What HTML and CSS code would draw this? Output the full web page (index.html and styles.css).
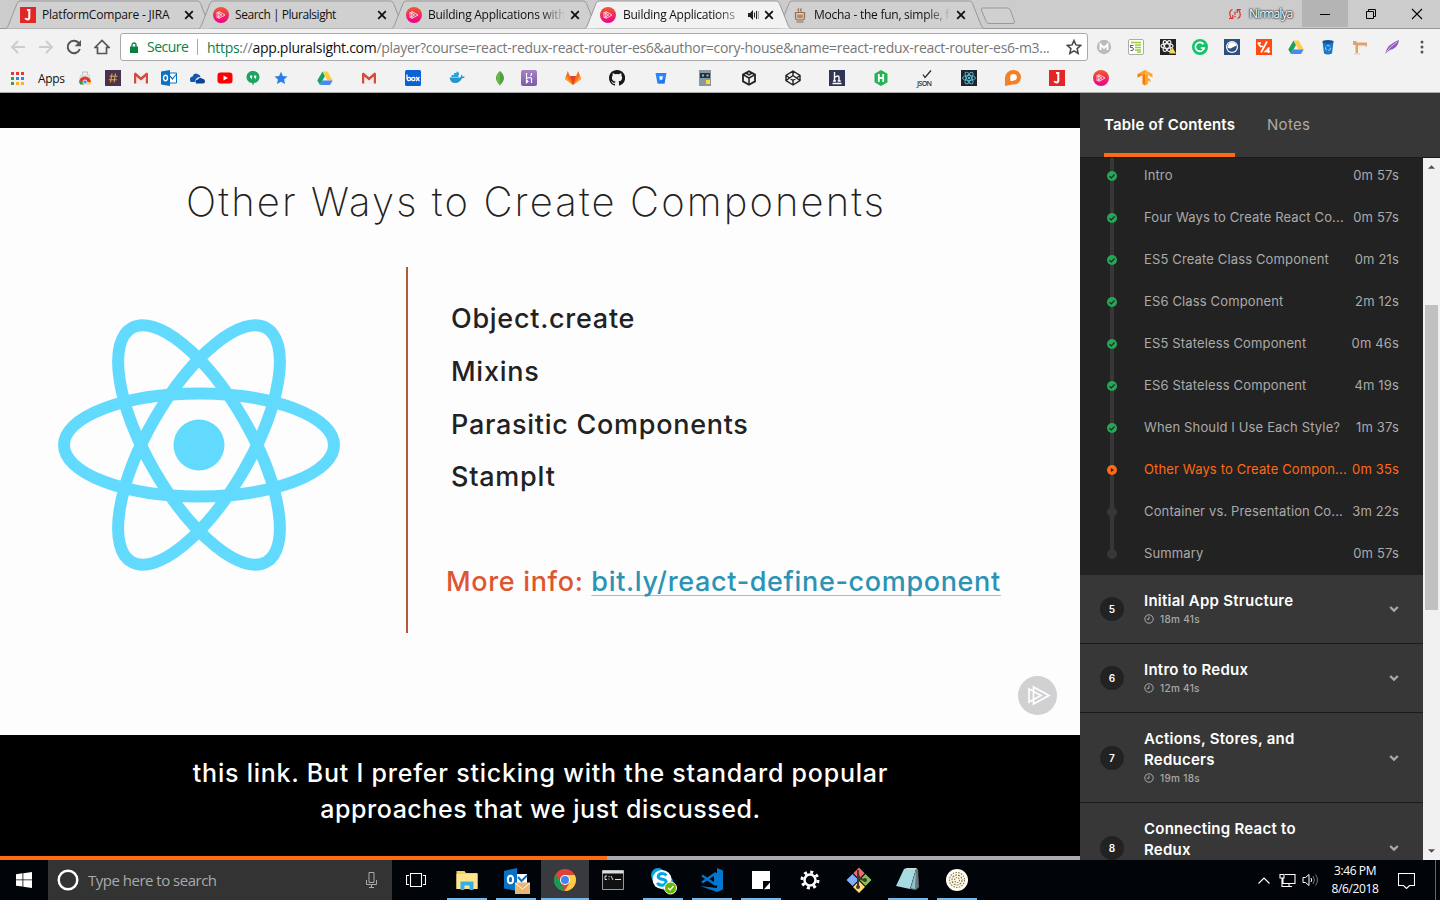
FILE: index.html
```html
<!DOCTYPE html>
<html lang="en">
<head>
<meta charset="utf-8">
<title>Building Applications with React and Redux</title>
<link rel="stylesheet" href="styles.css">
</head>
<body>
<svg class="defs" width="0" height="0">
  <defs>
    <linearGradient id="ps" x1="0" y1="0" x2="0" y2="1"><stop offset="0" stop-color="#f15b2a"/><stop offset="1" stop-color="#ec008c"/></linearGradient>
    <linearGradient id="vi" x1="0" y1="0" x2="0" y2="1"><stop offset="0" stop-color="#a583c4"/><stop offset="1" stop-color="#7d5aa8"/></linearGradient>
    <symbol id="i-ps" viewBox="0 0 16 16"><circle cx="8" cy="8" r="8" fill="url(#ps)"/><path d="M5.800 4.500 12 8l-6.200 3.500zM4 5.300 8.700 8 4 10.700z" fill="none" stroke="#fff" stroke-width=".9" opacity=".85"/></symbol>
    <symbol id="i-jira" viewBox="0 0 16 16"><path fill="#e22626" d="M0 0h16v16H0z"/><path d="M7 3h3.400M9.300 3v7.200q0 2.200-2 2.200-1.500 0-2-1.200" fill="none" stroke="#fff" stroke-width="2"/></symbol>
    <symbol id="i-x" viewBox="0 0 10 10"><path d="m1.200 1.200 7.600 7.600m0-7.600-7.600 7.600" stroke="#111" stroke-width="1.800"/></symbol>
    <symbol id="i-gmail" viewBox="0 0 16 16"><path fill="#eee" d="M2 3h12v11H2z"/><path fill="#d54b3d" d="M1 4v9.500h2.200V6.500L8 10.500l4.800-4V13.500H15V4q0-1.500-1.500-1.500L8 7.300 2.500 2.500Q1 2.500 1 4z"/></symbol>
    <symbol id="i-drive" viewBox="0 0 16 16"><path fill="#19a15f" d="M5.500 1.500 8 6 3 15 .3 10.500z"/><path fill="#fc4" d="M5.500 1.500h5.200l5 9h-5.200z"/><path fill="#4688f4" d="M5.500 10.500h10.200L13 15H3z"/></symbol>
    <symbol id="i-chev" viewBox="0 0 10 8"><path d="m1.200 2 3.800 3.600L8.800 2" fill="none" stroke="#aaa" stroke-width="2.300"/></symbol>
    <symbol id="i-clock" viewBox="0 0 10 10"><circle cx="5" cy="5" r="4.200" fill="none" stroke="#aaa"/><path d="M5 2.500V5.300H2.800" fill="none" stroke="#aaa"/></symbol>
    <symbol id="i-done" viewBox="0 0 10 10"><circle cx="5" cy="5" r="5" fill="#23a956"/><path d="m2.500 5.200 1.800 1.700 3.300-3.500" fill="none" stroke="#222" stroke-width="1.200"/></symbol>
    <symbol id="i-now" viewBox="0 0 10 10"><circle cx="5" cy="5" r="5" fill="#ff6a13"/><path d="M3.900 3.100 7 5 3.900 6.900z" fill="#222"/></symbol>
    <symbol id="i-todo" viewBox="0 0 10 10"><circle cx="5" cy="5" r="5" fill="#373737"/></symbol>
    <symbol id="i-tab" viewBox="0 0 206 29"><path d="M0 28.500Q1.500 28 2.500 25L11 3.500Q12 1 14 1H191.500Q193.500 1 194.500 3.500L203 25Q204 28 206 28.500" stroke="#999"/></symbol>
  </defs>
</svg>

<header class="browser">
  <div class="tabs">
    <div class="tab"><svg class="shape"><use href="#i-tab"/></svg><svg class="fav"><use href="#i-jira"/></svg><span class="name">PlatformCompare - JIRA</span><svg class="x"><use href="#i-x"/></svg></div>
    <div class="tab"><svg class="shape"><use href="#i-tab"/></svg><svg class="fav"><use href="#i-ps"/></svg><span class="name tight">Search | Pluralsight</span><svg class="x"><use href="#i-x"/></svg></div>
    <div class="tab"><svg class="shape"><use href="#i-tab"/></svg><svg class="fav"><use href="#i-ps"/></svg><span class="name fade">Building Applications with</span><svg class="x"><use href="#i-x"/></svg></div>
    <div class="tab active"><svg class="shape"><use href="#i-tab"/></svg><svg class="fav"><use href="#i-ps"/></svg><span class="name short">Building Applications</span><svg class="sound" viewBox="0 0 11 10"><path d="M0 3h2l3-3v10L2 7H0z" fill="#222"/><path d="M6.500 2.500v5M8.500 1v8" stroke="#222"/><path d="M10.300 1v8" stroke="#999"/></svg><svg class="x"><use href="#i-x"/></svg></div>
    <div class="tab"><svg class="shape"><use href="#i-tab"/></svg><svg class="fav" viewBox="0 0 16 16"><path d="M3.500 5.500h9v5q0 2-2 2.500h-5q-2-.5-2-2.500zM4.500 15h7M7 4.500q-2-1.500 0-3M9.500 4.500q-2-1.500 0-3" fill="none" stroke="#9a6a45" stroke-width="1.200"/><path d="M5 7.500h6v3q-3 2-6 0z" fill="#b98a63"/></svg><span class="name fade">Mocha - the fun, simple, f</span><svg class="x"><use href="#i-x"/></svg></div>
    <svg class="newtab" viewBox="0 0 36 18"><path d="M2.500 1h25q2 0 2.800 2l4 11q.7 2.500-1.300 2.500H9q-2 0-2.800-2L1.500 3Q1 1 2.500 1z" fill="#d0d0d0" stroke="#999"/></svg>
    <div class="window">
      <svg class="sync" viewBox="0 0 14 12"><path d="M4.500 1.500Q1.500 2.500 1.800 6T4 10.500M1 10.500h3.800V7M9.500 10.500q3-1 2.700-4.500T10 1.500M13 1.500H9.200V5" fill="none" stroke="#d32f2f" stroke-width="1.200"/><path d="M7 3.500v3.500M7 8v1.300" stroke="#d32f2f" stroke-width="1.200"/></svg>
      <span class="user">Nirmalya</span>
      <span class="wbtn hover"><svg viewBox="0 0 12 12"><path d="M1 6.500h10" stroke="#000"/></svg></span>
      <span class="wbtn"><svg viewBox="0 0 12 12"><path d="M1.500 3.500h7v7h-7zM3.500 3V1.500h7v7H9" fill="none" stroke="#000"/></svg></span>
      <span class="wbtn"><svg viewBox="0 0 12 12"><path d="m1 1 10 10M11 1 1 11" stroke="#000" stroke-width="1.100"/></svg></span>
    </div>
  </div>

  <div class="toolbar">
    <div class="nav">
      <svg viewBox="0 0 16 16"><path d="M15 8H2m6-6L2 8l6 6" fill="none" stroke="#ccc" stroke-width="1.800"/></svg>
      <svg viewBox="0 0 16 16"><path d="M1 8h13M8 2l6 6-6 6" fill="none" stroke="#ccc" stroke-width="1.800"/></svg>
      <svg viewBox="0 0 16 16"><path d="M13.800 10A6.200 6.200 0 1 1 12.500 3.800L14 5.500" fill="none" stroke="#555" stroke-width="2"/><path d="M15 1v6.300H8.700z" fill="#555"/></svg>
      <svg viewBox="0 0 16 16"><path d="M1 8.500 8 1.500l7 7h-2.500v6h-9v-6z" fill="none" stroke="#555" stroke-width="1.700"/></svg>
    </div>
    <div class="omnibox">
      <svg class="lock" viewBox="0 0 8 11"><path d="M2 5V3a2 2 0 0 1 4 0v2" fill="none" stroke="#0b8043" stroke-width="1.300"/><path d="M0 4.500h8V11H0z" fill="#0b8043"/></svg>
      <span class="secure">Secure</span>
      <span class="url"><i class="g">https</i>://<b>app.pluralsight.com</b>/player?course=react-redux-react-router-es6&amp;author=cory-house&amp;name=react-redux-react-router-es6-m3...</span>
      <svg class="star" viewBox="0 0 16 16"><path d="m8 1.500 1.900 4.400 4.900.5-3.700 3.200 1.100 4.800L8 11.900l-4.200 2.500 1.100-4.800L1.200 6.400l4.900-.5z" fill="none" stroke="#444" stroke-width="1.500"/></svg>
    </div>
    <div class="exts">
      <svg viewBox="0 0 16 16"><circle cx="8" cy="8" r="7.200" fill="#bbb"/><path d="M4.500 11V5.500L8 9l3.500-3.500V11" fill="none" stroke="#fff" stroke-width="1.800"/></svg>
      <svg viewBox="0 0 16 16"><rect x=".5" y=".5" width="15" height="15" rx="1.500" fill="#fff" stroke="#aaa"/><path d="M3 3.500h10M7 6h6M7 8.500h6M7 11h6M9 13h4" stroke="#9bcb3c" stroke-width="1.300"/><path d="M5.500 6.500h-3v2q3-.5 3 1.500t-3 1.500" fill="none" stroke="#555"/></svg>
      <svg viewBox="0 0 16 16"><path fill="#222" d="M0 0h16v16H0z"/><g fill="none" stroke="#eee" stroke-width="1.200"><ellipse cx="7" cy="7" rx="6" ry="2.400"/><ellipse cx="7" cy="7" rx="6" ry="2.400" transform="rotate(60 7 7)"/><ellipse cx="7" cy="7" rx="6" ry="2.400" transform="rotate(120 7 7)"/></g><path d="m12.500 8.500 3.500 6H9z" fill="#f4e04d"/></svg>
      <svg viewBox="0 0 16 16"><circle cx="8" cy="8" r="8" fill="#15c26b"/><path d="M11.500 5.200A4.500 4.500 0 1 0 12.200 9H8.800" fill="none" stroke="#fff" stroke-width="1.700"/></svg>
      <svg viewBox="0 0 16 16"><path fill="#2f4f7f" d="M0 0h16v16H0z"/><circle cx="8" cy="8" r="6" fill="#fff"/><circle cx="8" cy="8" r="4.800" fill="#2f4f7f"/><path d="M3.500 8.500Q6 10.500 8.500 8.500t4-1.500Q12 3.300 8 3.300T3.500 8.500z" fill="#fff"/></svg>
      <svg viewBox="0 0 16 16"><path fill="#ff4a12" d="M0 0h16v16H0z"/><path d="M11 2.500 5 13.500M1.500 4h3.500M2 4l2.500 3.500H7M13.500 8.500l-4 4H14M12.500 8.500V14" fill="none" stroke="#fff" stroke-width="1.700"/></svg>
      <svg viewBox="0 0 16 16"><use href="#i-drive"/></svg>
      <svg viewBox="0 0 16 16"><path d="M2.500 2.500h11l-1.500 12q-4 2-8 0z" fill="#1d78c9"/><ellipse cx="8" cy="2.700" rx="5.500" ry="1.800" fill="#145494"/><circle cx="8" cy="9" r="2.500" fill="none" stroke="#a9dcff" stroke-dasharray="3.500 1.500"/></svg>
      <svg viewBox="0 0 16 16"><path d="M1 2h3.500v1.500H15v4h-1.500V6.500H6V14H3.500V6H1z" fill="#e2a368"/><path d="M2 15h6" stroke="#ccc"/></svg>
      <svg viewBox="0 0 16 16"><path d="M1 15Q3 5 15 1q-1 8-9 10z" fill="#9357bd"/><path d="M1 15Q6 7 13 3" stroke="#d9bdee" fill="none"/></svg>
      <svg class="dots" viewBox="0 0 4 16"><g fill="#555"><circle cx="2" cy="3" r="1.500"/><circle cx="2" cy="8" r="1.500"/><circle cx="2" cy="13" r="1.500"/></g></svg>
    </div>
  </div>

  <div class="bookmarks">
    <svg class="grid" viewBox="0 0 13 13"><path d="M0 1.500h13" stroke="#e53a34" stroke-width="3" stroke-dasharray="3 2"/><path d="M0 6.500h3" stroke="#3c9e4d" stroke-width="3"/><path d="M5 6.500h8" stroke="#2b87f0" stroke-width="3" stroke-dasharray="3 2"/><path d="M0 11.500h3" stroke="#3c9e4d" stroke-width="3"/><path d="M5 11.500h8" stroke="#fbb325" stroke-width="3" stroke-dasharray="3 2"/></svg>
    <span class="apps">Apps</span>
    <div class="near">
      <svg viewBox="0 0 16 16"><path d="M3 4.500h10l1.500 9.500h-13z" fill="#ddd"/><path d="M5.500 4.500V2h5v2.500" fill="none" stroke="#bbb"/><path d="M2 12.500a6 6 0 0 1 12 0z" fill="#e03b2f"/><path d="M2.500 11 6 12l1.500 2.500H3z" fill="#2ea04f"/><path d="M14 12h-4l-2 2.500h5.500z" fill="#fc4"/><circle cx="8" cy="12" r="2" fill="#4688f4" stroke="#fff" stroke-width=".8"/></svg>
      <svg viewBox="0 0 16 16"><path fill="#4a314d" d="M0 0h16v16H0z"/><path d="M7 3.500 5.500 12.500M10.500 3.500 9 12.500M4.500 6.200h8M3.800 9.800h8" stroke="#d8a948" stroke-width="1.100"/></svg>
      <svg viewBox="0 0 16 16"><use href="#i-gmail"/></svg>
      <svg viewBox="0 0 16 16"><path d="M8 3h7.500v10H8z" fill="#fff" stroke="#0a72c4"/><path d="m9 6 2.500 3L15 4.500" fill="none" stroke="#0a72c4" stroke-width="1.200"/><path d="M0 1.500 9 0v16l-9-1.500z" fill="#0a72c4"/><ellipse cx="4.500" cy="8" rx="2" ry="2.700" fill="none" stroke="#fff" stroke-width="1.400"/></svg>
      <svg viewBox="0 0 16 16"><path d="M1 10q-.5-3 2.500-3.500Q5 2.500 8.500 4q3 1 3 3-5 0-5.500 5H2q-1-.5-1-2z" fill="#1557b0"/><path d="M7 13.500q-1.500-4 2-4Q10.500 6.500 13 8.500q3 .5 3 3 0 2-2 2z" fill="#0b4497"/></svg>
      <svg viewBox="0 0 16 16"><rect x=".5" y="2.500" width="15" height="11" rx="3" fill="#f00"/><path d="m6.500 5.500 4.500 2.500-4.500 2.500z" fill="#fff"/></svg>
      <svg viewBox="0 0 16 16"><path d="M8 1a6 6 0 0 1 1 12l-1 2.500-1-2.500A6 6 0 0 1 8 1z" fill="#1fa363"/><path d="M5 5.500h2.200v2.200L6 9.500V7.700H5zM9 5.500h2.200v2.200L10 9.500V7.700H9z" fill="#fff"/></svg>
      <svg viewBox="0 0 16 16"><path d="m8 1.800 1.900 4.100 4.600.5-3.400 3.100 1 4.500L8 11.700 3.900 14l1-4.500-3.400-3.100 4.600-.5z" fill="#2b7de9"/></svg>
    </div>
    <div class="far">
      <svg viewBox="0 0 16 16"><use href="#i-drive"/></svg>
      <svg viewBox="0 0 16 16"><use href="#i-gmail"/></svg>
      <svg viewBox="0 0 16 16"><rect width="16" height="16" rx="1.500" fill="#0a61d5"/><path d="M2 4.500V9" stroke="#fff" stroke-width="1.300"/><circle cx="4" cy="9" r="1.700" fill="none" stroke="#fff" stroke-width="1.300"/><circle cx="8.300" cy="9" r="1.700" fill="none" stroke="#fff" stroke-width="1.300"/><path d="m11 7 3.500 4M14.500 7 11 11" stroke="#fff" stroke-width="1.300"/></svg>
      <svg viewBox="0 0 16 16"><path d="M0 7.500h11.500q1-1.500.500-3 1.500.500 1.500 2 1.500 0 2.500.300-1 1.500-3 1.500-2 4.700-7 4.700-4.500 0-5.500-5.500z" fill="#2496ce"/><path d="M2.500 6h7M5 4h5" stroke="#2aa5dd" stroke-width="2"/><path d="M7.500 2.500h2" stroke="#2aa5dd" stroke-width="1.500"/></svg>
    </div>
    <svg class="leaf" viewBox="0 0 16 16"><path d="M8 1q8 7 0 14-8-7 0-14z" fill="#4fa33f"/><path d="M8 1v15q-7-7.500 0-15z" fill="#69b545"/></svg>
    <div class="far last">
      <svg viewBox="0 0 16 16"><rect width="16" height="16" rx="2" fill="url(#vi)"/><path d="M5.500 3v5.500q5-2 5 0V13M10.500 3v1.500L9.500 6M5.500 10v2.800L7 11.500z" fill="none" stroke="#fff" stroke-width="1.200"/></svg>
      <svg viewBox="0 0 16 16"><path d="M8 15 0 9l2.700-8L5 6h6l2.300-5L16 9z" fill="#fc6d26"/><path d="M8 15 5 6h6z" fill="#e24329"/><path d="m8 15-8-6 1-3zM8 15l8-6-1-3z" fill="#fca326"/></svg>
      <svg viewBox="0 0 16 16"><path fill="#191717" d="M8 0C3.580 0 0 3.580 0 8c0 3.540 2.290 6.530 5.470 7.590.4.070.55-.17.55-.38v-1.340c-2.230.48-2.690-1.070-2.690-1.070-.36-.92-.89-1.170-.89-1.170-.73-.5.06-.49.06-.49.8.06 1.230.83 1.230.83.72 1.210 1.870.87 2.330.66.070-.52.28-.87.5-1.070-1.780-.2-3.640-.89-3.640-3.950 0-.87.31-1.590.82-2.150-.08-.2-.36-1.020.08-2.120 0 0 .67-.21 2.200.82a7.600 7.600 0 0 1 4 0c1.530-1.040 2.200-.82 2.200-.82.44 1.100.16 1.920.08 2.120.51.56.82 1.270.82 2.150 0 3.070-1.870 3.750-3.650 3.950.29.25.54.73.54 1.480v2.200c0 .21.15.46.55.38A8 8 0 0 0 8 0z"/></svg>
      <svg viewBox="0 0 16 16"><path d="M2.500 3h11l-2 10.500h-7z" fill="#2684ff"/><path d="M6.300 6.300h3.500l-.5 3.400H6.800z" fill="#fff"/><path d="m10 9.700 2.200-2-.8 5.800H5z" fill="#1867dc" opacity=".6"/></svg>
      <svg viewBox="0 0 16 16"><path fill="#8a979f" d="M2 0h12v16H2z"/><path fill="#263238" d="M3 3h10v5H3z"/><path d="M5 5.500h2M9.500 5.500h2" stroke="#4dd0ff" stroke-width="2"/><path d="M9 10h4v4H9z" fill="#ffd740"/></svg>
      <svg viewBox="0 0 16 16"><path d="m8 1.200 6 3.400v6.800l-6 3.400-6-3.400V4.600z" fill="none" stroke="#222" stroke-width="1.800"/><path d="M8 15V8l6-3.400M8 8 2 4.600M5 3l3 1.800L11 3" fill="none" stroke="#222" stroke-width="1.500"/></svg>
      <svg viewBox="0 0 16 16"><path d="m8 1 7 4.500v5L8 15l-7-4.500v-5zM8 1v4.500M8 10.500V15M1 5.500l7 5 7-5M1 10.500l7-5 7 5" fill="none" stroke="#222" stroke-width="1.400"/></svg>
      <svg viewBox="0 0 16 16"><path fill="#2e3654" d="M0 0h16v16H0z"/><path d="M5.500 2v9M5.500 7.500q4.500-3 4.500 0V11M4 11h3M8.700 11h3M3.500 13.500h9" fill="none" stroke="#fff" stroke-width="1.400"/></svg>
      <svg viewBox="0 0 16 16"><path d="m8 0 6.500 3.700v8.600L8 16l-6.500-3.700V3.700z" fill="#22b455"/><path d="M5.800 4v8M10.200 4v8M5.800 8h4.400" stroke="#fff" stroke-width="1.800"/></svg>
      <svg class="wide" viewBox="0 0 16 16"><path d="m6 4.500 2 3L14 .5" fill="none" stroke="#222" stroke-width="1.200"/><text x="0" y="15.500" class="json" textLength="15">JSON</text></svg>
      <svg viewBox="0 0 16 16"><path fill="#20232a" d="M0 0h16v16H0z"/><g fill="none" stroke="#53c1de" stroke-width=".9"><ellipse cx="8" cy="8" rx="6.500" ry="2.500"/><ellipse cx="8" cy="8" rx="6.500" ry="2.500" transform="rotate(60 8 8)"/><ellipse cx="8" cy="8" rx="6.500" ry="2.500" transform="rotate(120 8 8)"/></g><circle cx="8" cy="8" r="1.200" fill="#53c1de"/></svg>
      <svg viewBox="0 0 16 16"><path d="M8.500 0a7.300 7.300 0 1 1-1 14.500L0 16V8a8 8 0 0 1 8.500-8z" fill="#f58025"/><circle cx="8.500" cy="7.300" r="3.300" fill="#fff"/><path d="M5.500 7v4h3" fill="#fff"/></svg>
      <svg viewBox="0 0 16 16"><use href="#i-jira"/></svg>
      <svg viewBox="0 0 16 16"><use href="#i-ps"/></svg>
      <svg viewBox="0 0 16 16"><path d="M8 0 .5 4.300v3.500L5.500 5v9L8 15.500V4.500z" fill="#f57c00"/><path d="m8 0 7.500 4v3.500L11 5v3l2.500 1.500V12L11 10.500V14l-3 1.500z" fill="#ffa726"/><path d="M.5 4.300 8 0l7.500 4L8 4.500z" fill="#ffb74d" opacity=".6"/></svg>
    </div>
  </div>
</header>

<main class="player">
  <section class="video">
    <div class="slide">
      <h1>Other Ways to Create Components</h1>
      <div class="content">
        <svg class="react" viewBox="-142 -127 284 254"><g fill="none" stroke="#62dafd" stroke-width="12"><ellipse rx="135" ry="51.500"/><ellipse rx="135" ry="51.500" transform="rotate(60)"/><ellipse rx="135" ry="51.500" transform="rotate(120)"/></g><circle r="25.500" fill="#62dafd"/></svg>
        <div class="points">
          <ul><li>Object.create</li><li>Mixins</li><li>Parasitic Components</li><li>StampIt</li></ul>
          <p class="more">More info: <a>bit.ly/react-define-component</a></p>
        </div>
      </div>
      <svg class="mark" viewBox="0 0 39 39"><circle cx="19.500" cy="19.500" r="19.500" fill="#d1d0d2"/><path d="M15.500 11 31 19.500 15.500 28zM11 13l12 6.500L11 26z" fill="none" stroke="#fff" stroke-width="1.700"/></svg>
    </div>
    <p class="caption">this link. But I prefer sticking with the standard popular<br><span>approaches that we just discussed.</span></p>
    <div class="progress"><div class="played"></div></div>
  </section>

  <aside class="side">
    <nav class="sidetabs"><span class="on">Table of Contents</span><span>Notes</span></nav>
    <div class="scroller">
      <div class="toc">
        <ol class="clips">
          <li><svg><use href="#i-done"/></svg><span>Intro</span><time>0m 57s</time></li>
          <li><svg><use href="#i-done"/></svg><span>Four Ways to Create React Co...</span><time>0m 57s</time></li>
          <li><svg><use href="#i-done"/></svg><span>ES5 Create Class Component</span><time>0m 21s</time></li>
          <li><svg><use href="#i-done"/></svg><span>ES6 Class Component</span><time>2m 12s</time></li>
          <li><svg><use href="#i-done"/></svg><span>ES5 Stateless Component</span><time>0m 46s</time></li>
          <li><svg><use href="#i-done"/></svg><span>ES6 Stateless Component</span><time>4m 19s</time></li>
          <li><svg><use href="#i-done"/></svg><span>When Should I Use Each Style?</span><time>1m 37s</time></li>
          <li class="now"><svg><use href="#i-now"/></svg><span>Other Ways to Create Compon...</span><time>0m 35s</time></li>
          <li><svg><use href="#i-todo"/></svg><span>Container vs. Presentation Co...</span><time>3m 22s</time></li>
          <li><svg><use href="#i-todo"/></svg><span>Summary</span><time>0m 57s</time></li>
        </ol>
        <div class="module"><b class="num">5</b><div class="info"><h2>Initial App Structure</h2><p><svg><use href="#i-clock"/></svg>18m 41s</p></div><svg class="chev"><use href="#i-chev"/></svg></div>
        <div class="module"><b class="num">6</b><div class="info"><h2>Intro to Redux</h2><p><svg><use href="#i-clock"/></svg>12m 41s</p></div><svg class="chev"><use href="#i-chev"/></svg></div>
        <div class="module"><b class="num">7</b><div class="info"><h2>Actions, Stores, and Reducers</h2><p><svg><use href="#i-clock"/></svg>19m 18s</p></div><svg class="chev"><use href="#i-chev"/></svg></div>
        <div class="module final"><b class="num">8</b><div class="info"><h2>Connecting React to Redux</h2></div><svg class="chev"><use href="#i-chev"/></svg></div>
      </div>
      <div class="scrollbar"><svg viewBox="0 0 8 4"><path d="m0 4 4-4 4 4z" fill="#505050"/></svg><div class="thumb"></div><svg viewBox="0 0 8 4"><path d="m0 0 4 4 4-4z" fill="#505050"/></svg></div>
    </div>
  </aside>
</main>

<footer class="taskbar">
  <div class="start"><svg width="16" height="16" viewBox="0 0 16 16"><path d="M0 2.200 6.500 1.300v6.200H0zM7.300 1.200 16 0v7.500H7.300zM0 8.300h6.500v6.300L0 13.700zM7.300 8.300H16V16l-8.700-1.200z" fill="#fff"/></svg></div>
  <div class="search">
    <svg width="22" height="22" viewBox="0 0 22 22"><circle cx="11" cy="11" r="9.300" fill="none" stroke="#fff" stroke-width="2.400"/></svg>
    <span>Type here to search</span>
    <svg class="mic" width="11" height="16" viewBox="0 0 11 16"><path d="M3 .5h5v10H3zM.5 8v4.500h10V8M5.500 12.500v3M3 15.500h5" fill="none" stroke="#aaa"/></svg>
  </div>
  <div class="view"><svg width="20" height="14" viewBox="0 0 20 14"><path d="M4.500.5h11v13h-11zM3 2.500H.5v9H3M17 2.500h2.500v9H17" fill="none" stroke="#fff" stroke-width="1.100"/></svg></div>
  <div class="tasks">
    <div class="task run"><svg viewBox="0 0 24 24"><path d="M1.500 3h8l1.500 2h11.500v16h-21z" fill="#fbd15b"/><path d="M1.500 6h21v15h-21z" fill="#ffe48f"/><path d="M5.500 22v-8.500h13V22h-4v-4.500h-5V22z" fill="#39aee6"/></svg></div>
    <div class="task run"><svg viewBox="0 0 24 24"><path d="M12 6h11v12H12z" fill="#fff"/><path d="m14 9 3.500 4L23 7.500" fill="none" stroke="#0a72c4" stroke-width="2"/><path d="M0 3 13 0v23L0 20.500z" fill="#0a72c4"/><ellipse cx="6.500" cy="11.500" rx="2.600" ry="3.800" fill="none" stroke="#fff" stroke-width="2"/><path d="M11 14.500h15V26H11z" fill="#eab676"/><path d="m11 15 7.500 6L26 15" fill="none" stroke="#fff"/></svg></div>
    <div class="task run live"><svg viewBox="0 0 24 24"><circle cx="12" cy="12" r="11" fill="#db4437"/><path d="M2.500 6.500 8 15l3.500 8A11 11 0 0 1 2.500 6.500z" fill="#0f9d58"/><path d="M12 7h9.800A11 11 0 0 1 11.500 23l5-8z" fill="#ffcd40"/><circle cx="12" cy="12" r="5" fill="#fff"/><circle cx="12" cy="12" r="4" fill="#4285f4"/></svg></div>
    <div class="task"><svg viewBox="1 0 24 24"><path d="M1.500 2.500h21v19h-21z" fill="#111" stroke="#999"/><path d="M1.500 2.500h21v3h-21z" fill="#ddd"/><path d="M6 8H4v3.500h2M8 8v1M8 10.500v1M10 8l2 4M14 11.500h6" fill="none" stroke="#ddd"/></svg></div>
    <div class="task run"><svg viewBox="0 0 24 24"><circle cx="7" cy="7" r="7" fill="#00a6e8"/><circle cx="15" cy="15" r="7.500" fill="#00a6e8"/><circle cx="11" cy="11.500" r="9.500" fill="#fff"/><path d="M15.500 7.500Q14 5.500 11 5.500t-3.800 2.700q0 2.500 4 3t4 3q-.500 3-4.200 3t-4.500-2.500" fill="none" stroke="#00a6e8" stroke-width="3"/><circle cx="19.500" cy="20" r="6" fill="#6bb700" stroke="#fff"/><path d="m17 20 2 2 3.500-4" fill="none" stroke="#fff" stroke-width="1.400"/></svg></div>
    <div class="task run"><svg viewBox="0 0 24 24"><path d="m17 0 6 2.500v19L17 24 0 18l17 2z" fill="#0078d0"/><path d="M16 5 2 14.500M2 7.500 16 17" fill="none" stroke="#0078d0" stroke-width="2.500"/><path d="M15.500 5v12" stroke="#0078d0" stroke-width="3"/></svg></div>
    <div class="task run"><svg viewBox="0 0 24 24"><path d="M3 3h18v10h-7v8H3z" fill="#fff"/><path d="M21 14.500V21l-6 .2z" fill="#fff"/></svg></div>
    <div class="task"><svg viewBox="0 0 24 24"><circle cx="12" cy="12" r="5.500" fill="none" stroke="#fff" stroke-width="2.500"/><circle cx="12" cy="12" r="8" fill="none" stroke="#fff" stroke-width="3" stroke-dasharray="3 3.280"/></svg></div>
    <div class="task"><svg viewBox="0 0 24 24"><path d="m12-.5 5.700 5.700-5.700 5.700-5.700-5.700z" fill="#f06a66"/><path d="m5.500 6 6 6-6 6-6-6z" fill="#7fb0ff"/><path d="m18.500 6 6 6-6 6-6-6z" fill="#80c54b"/><path d="m12 13 6 6-6 6-6-6z" fill="#ffdc6b"/><path d="M11 2v17M11 6q1 5 6 6" fill="none" stroke="#4a3535" stroke-width="2"/><circle cx="11" cy="19" r="2" fill="#4a3535"/><circle cx="18" cy="12" r="2" fill="#4a3535"/></svg></div>
    <div class="task run"><svg viewBox="0 0 24 24"><path d="M8 1h12l-6 20L0 18z" fill="#a5dbe1"/><path d="m8 1 3-1h10l-1 1.500z" fill="#d6dede"/><path d="m20 1-6 20 6 1 3-3-1-18z" fill="#68777a"/><path d="m20 3-5 17 4 1z" fill="#89c4cc"/></svg></div>
    <div class="task run"><svg viewBox="0 0 24 24"><circle cx="12" cy="12" r="11" fill="#fffdf2"/><g fill="none" stroke="#8f7d48" stroke-width="1.200"><circle cx="12" cy="12" r="7.500" stroke-dasharray="1.500 1.300"/><circle cx="12" cy="12" r="5" stroke-dasharray="2 1"/><circle cx="12" cy="12" r="2.500" stroke-dasharray="1.500 1"/></g></svg></div>
  </div>
  <div class="tray">
    <svg width="12" height="7" viewBox="0 0 12 7"><path d="m.5 6.500 5.500-5.500 5.500 5.500" fill="none" stroke="#fff" stroke-width="1.200"/></svg>
    <svg width="17" height="14" viewBox="0 0 17 14"><path d="M4 5v5.500h12V1.500H6M1 1.500h4V5H1zM3 5v8.500h4M7 13.500h6M10 10.500v3" fill="none" stroke="#fff" stroke-width="1.100"/></svg>
    <svg width="17" height="14" viewBox="0 0 17 14"><path d="M1 4.500h2.500l3.500-3v11l-3.500-3H1z" fill="none" stroke="#fff"/><path d="M9 5q1.500 2 0 4" fill="none" stroke="#fff"/><path d="M11 3q3 4 0 8M13.500 1.500q4 5.500 0 11" fill="none" stroke="#777"/></svg>
    <div class="clock"><span>3:46 PM</span><span>8/6/2018</span></div>
    <svg class="note" width="17" height="17" viewBox="0 0 17 17"><path d="M.5 1.500h16v12h-5l-3 3-3-3h-5z" fill="none" stroke="#fff" stroke-width="1.100"/></svg>
    <i class="peek"></i>
  </div>
</footer>
</body>
</html>
```

FILE: styles.css
```css
* { box-sizing: border-box; margin: 0; padding: 0; }
body { width: 1440px; height: 900px; overflow: hidden; display: flex; flex-direction: column; background: #000; font-family: Inter, "Liberation Sans", sans-serif; }
svg { display: block; flex: none; }
.defs { position: absolute; }
ol, ul { list-style: none; }

.browser { height: 93px; flex: none; background: #f2f2f2; border-bottom: 1px solid #aaa; font-family: "Open Sans", "Noto Sans", sans-serif; color: #111; }
.tabs { height: 29px; display: flex; background: #ccc; padding-left: 6px; box-shadow: inset 0 -1px #999; }
.tab { position: relative; width: 206px; height: 29px; margin-right: -13px; padding: 0 12px 0 14px; display: flex; align-items: center; flex: none; }
.shape { position: absolute; left: 0; top: 0; width: 206px; height: 29px; fill: #d0d0d0; }
.active { z-index: 2; padding-left: 15px; }
.active .shape { fill: #f2f2f2; }
.fav { position: relative; width: 16px; height: 16px; margin-right: 6px; }
.name { position: relative; width: 136px; margin-right: 6px; font-size: 12px; letter-spacing: -.2px; white-space: nowrap; }
.tight { letter-spacing: -.45px; }
.fade { letter-spacing: -.25px; -webkit-mask-image: linear-gradient(90deg, #000 112px, transparent 138px); mask-image: linear-gradient(90deg, #000 112px, transparent 138px); }
.short { width: 124px; margin: 0 1px 0 1px; letter-spacing: -.25px; -webkit-mask-image: linear-gradient(90deg, #000 92px, rgba(0, 0, 0, .4) 114px); mask-image: linear-gradient(90deg, #000 92px, rgba(0, 0, 0, .4) 114px); }
.sound { position: relative; width: 11px; height: 10px; margin-right: 5px; }
.x { position: relative; width: 10px; height: 10px; }
.newtab { width: 36px; height: 18px; margin: 7px 0 0 9px; }
.window { margin-left: auto; display: flex; align-items: center; height: 27px; }
.sync { width: 14px; height: 12px; margin-right: 7px; }
.user { width: 53px; font-size: 12px; letter-spacing: -.9px; color: #fff; text-shadow: 0 0 2px #000, 0 0 2px #000; }
.wbtn { width: 46px; height: 27px; display: flex; align-items: center; justify-content: center; }
.wbtn svg { width: 12px; height: 12px; }
.hover { background: #b4b4b4; }

.toolbar { height: 36px; display: flex; align-items: center; padding-left: 10px; }
.nav { display: flex; gap: 12px; width: 110px; }
.nav svg { width: 16px; height: 16px; }
.omnibox { width: 968px; height: 28px; border: 1px solid #aaa; border-radius: 3px; background: #fff; display: flex; align-items: center; padding: 0 5px 0 9px; font-size: 14px; }
.lock { width: 8px; height: 11px; margin-right: 9px; }
.secure { width: 51px; height: 16px; line-height: 15px; color: #0b8043; letter-spacing: -.5px; border-right: 1px solid #aaa; }
.url { width: 858px; margin-left: 9px; letter-spacing: -.29px; color: #777; white-space: nowrap; }
.url b { font-weight: 400; color: #111; }
.g { font-style: normal; color: #0b8043; }
.star { width: 16px; height: 16px; margin-left: auto; }
.exts { display: flex; gap: 16px; margin-left: 8px; }
.exts svg { width: 16px; height: 16px; }
.exts .dots { width: 4px; margin-left: 4px; }

.bookmarks { height: 27px; display: flex; align-items: center; padding: 0 0 1px 11px; }
.grid { width: 13px; height: 13px; }
.apps { width: 39px; margin-left: 14px; font-size: 12px; letter-spacing: -.3px; }
.bookmarks svg:not(.grid) { width: 16px; height: 16px; }
.near { display: flex; gap: 12px; }
.far { display: flex; gap: 28px; margin-left: 28px; }
.leaf { margin-left: 27px; }
.last { margin-left: 13px; }
.wide { overflow: visible; }
.json { font: 600 7px "Open Sans", sans-serif; fill: #234; }

.player { height: 767px; display: flex; }
.video { width: 1080px; display: flex; flex-direction: column; padding-top: 35px; background: #000; }
.slide { height: 607px; flex: none; background: #fefdfe; color: #222; display: flex; flex-direction: column; }
h1 { height: 139px; padding: 45px 0 0 186px; font-size: 40px; font-weight: 200; line-height: 58px; letter-spacing: 2.130px; white-space: nowrap; }
.content { display: flex; height: 366px; }
.react { width: 284px; height: 254px; margin: 50.500px 65px 0 56.500px; }
.points { border-left: 2px solid #b5573a; padding: 25px 0 0 43.500px; font-size: 27px; font-weight: 500; letter-spacing: .72px; white-space: nowrap; }
.points li { height: 52.800px; line-height: 53px; }
.more { margin: 52px 0 0 -5px; line-height: 53px; color: #dc5631; letter-spacing: .65px; }
.more a { color: #2b93b4; text-decoration: underline; text-decoration-color: #8fc6d9; text-decoration-thickness: 1px; text-underline-offset: 4px; text-decoration-skip-ink: none; }
.mark { width: 39px; height: 39px; margin: 43px 0 0 1018px; }
.caption { flex: 1; padding: 19.500px 0 0 1px; text-align: center; color: #fff; font-size: 25px; font-weight: 500; line-height: 36px; letter-spacing: .77px; white-space: nowrap; }
.caption span { letter-spacing: .54px; }
.progress { height: 4px; background: #aaa; }
.played { width: 607px; height: 4px; background: #ff6a13; }

.side { width: 360px; display: flex; flex-direction: column; background: #373737; }
.sidetabs { height: 65px; flex: none; display: flex; gap: 32px; padding-left: 24px; border-bottom: 1px solid #1b1b1b; color: #aaa; font-size: 15px; line-height: 64px; }
.sidetabs span { height: 64px; letter-spacing: .3px; }
.sidetabs .on { width: 131px; color: #fff; font-weight: 600; letter-spacing: .18px; border-bottom: 4px solid #ff6a13; white-space: nowrap; }
.scroller { height: 702px; display: flex; overflow: hidden; }
.toc { width: 343px; height: 702px; overflow: hidden; }
.clips { height: 417px; overflow: hidden; background: #222 linear-gradient(#373737, #373737) 30px 0 / 4px 396px no-repeat; display: flex; flex-direction: column; justify-content: flex-end; }
.clips li { height: 42px; flex: none; display: flex; align-items: center; padding: 0 24px 0 27px; color: #aaa; font-size: 13px; }
.clips svg { width: 10px; height: 10px; margin-right: 27px; }
.clips span { letter-spacing: .14px; white-space: nowrap; padding-bottom: 2px; }
.clips time { margin-left: auto; letter-spacing: .15px; white-space: nowrap; padding-bottom: 2px; }
.clips .now { color: #ff6a13; }
.module { display: flex; align-items: center; padding: 15px 24px 17px 20px; background: #373737; border-bottom: 1px solid #1b1b1b; }
.final { padding-bottom: 32px; }
.num { width: 24px; height: 24px; margin: 2px 20px 0 0; border-radius: 50%; background: #222; color: #fff; font-size: 10px; font-weight: 600; line-height: 24px; text-align: center; }
.final .num { margin-top: 17px; }
.info { width: 190px; }
.info h2 { color: #fff; font-size: 15px; font-weight: 600; line-height: 21px; letter-spacing: .25px; }
.info p { display: flex; align-items: center; height: 15px; color: #aaa; font-size: 10px; font-weight: 500; letter-spacing: .3px; }
.info p svg { width: 10px; height: 10px; margin-right: 6px; }
.chev { width: 10px; height: 8px; margin: 2px 0 0 auto; }
.final .chev { margin-top: 17px; }
.scrollbar { width: 17px; display: flex; flex-direction: column; align-items: center; background: #f1f1f1; padding: 7px 0; }
.scrollbar svg { width: 7px; height: 4px; }
.thumb { width: 13px; height: 305px; margin: 136px 0 auto; background: #c1c1c1; }

.taskbar { height: 40px; display: flex; background: #010409; color: #fff; font-family: "Open Sans", "Noto Sans", sans-serif; }
.start { width: 48px; display: flex; align-items: center; justify-content: center; }
.search { width: 344px; display: flex; align-items: center; padding: 0 15px 0 9px; background: #333; color: #aaa; font-size: 15px; letter-spacing: -.5px; }
.search span { margin-left: 9px; line-height: 40px; }
.mic { margin-left: auto; }
.view { width: 51px; display: flex; align-items: center; padding-left: 14px; }
.tasks { display: flex; gap: 1px; }
.task { width: 48px; height: 40px; display: flex; align-items: center; justify-content: center; }
.task svg { width: 24px; height: 24px; overflow: visible; }
.run { background: linear-gradient(#76b9ed, #76b9ed) 4px 38px / 40px 2px no-repeat; }
.live { background: #383a3e linear-gradient(#76b9ed, #76b9ed) 0 38px / 48px 2px no-repeat; }
.tray { margin-left: auto; display: flex; align-items: center; }
.tray > svg { margin-right: 9px; }
.tray > svg:nth-child(2) { margin-right: 6px; }
.clock { width: 62px; margin-left: -4px; text-align: center; font-size: 12px; line-height: 18px; letter-spacing: -.4px; display: flex; flex-direction: column; padding-bottom: 1px; }
.tray .note { margin: 0 20px 0 12px; }
.peek { width: 1px; height: 40px; margin-right: 4px; background: #666; }
```
